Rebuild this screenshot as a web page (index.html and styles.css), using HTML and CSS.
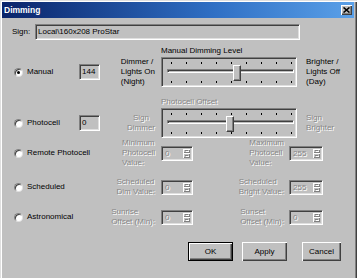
FILE: index.html
```html
<!DOCTYPE html>
<html>
<head>
<meta charset="utf-8">
<title>Dimming</title>
<link rel="stylesheet" href="styles.css">
</head>
<body>
<div class="win">
  <div class="titlebar">
    <span class="title">Dimming</span>
    <span class="close"><svg width="7" height="6" viewBox="0 0 7 6"><path d="M0.5 0.5 L6.5 5.5 M6.5 0.5 L0.5 5.5" stroke="#000" stroke-width="1.6"/></svg></span>
  </div>
  <div class="content">
    <div class="sign-row">
      <span class="sign-lbl">Sign:</span>
      <div class="field sign-field">Local\160x208 ProStar</div>
    </div>

    <div class="caption">Manual Dimming Level</div>
    <div class="row">
      <div class="choice"><span class="radio on"></span>Manual</div>
      <div class="tb"><div class="field val">144</div></div>
      <div class="llabel"><span>Dimmer /<br>Lights On<br>(Night)</span></div>
      <div class="slider">
        <div class="ticks"><i></i><i></i><i></i><i></i><i></i><i></i><i></i><i></i><i></i></div>
        <div class="channel"></div>
        <div class="ticks"><i></i><i></i><i></i><i></i><i></i><i></i><i></i><i></i><i></i></div>
        <div class="thumb" style="left:71px"></div>
      </div>
      <div class="rlabel">Brighter /<br>Lights Off<br>(Day)</div>
    </div>

    <div class="caption dis">Photocell Offset</div>
    <div class="row">
      <div class="choice"><span class="radio"></span>Photocell</div>
      <div class="tb"><div class="field val">0</div></div>
      <div class="llabel"><span class="dis center">Sign<br>Dimmer</span></div>
      <div class="slider">
        <div class="ticks"><i></i><i></i><i></i><i></i><i></i><i></i><i></i><i></i><i></i></div>
        <div class="channel"></div>
        <div class="ticks"><i></i><i></i><i></i><i></i><i></i><i></i><i></i><i></i><i></i></div>
        <div class="thumb" style="left:64px"></div>
      </div>
      <div class="rlabel dis">Sign<br>Brighter</div>
    </div>

    <div class="row">
      <div class="choice"><span class="radio"></span>Remote Photocell</div>
      <div class="tb"></div>
      <div class="llabel"><span class="dis">Minimum<br>Photocell<br>Value:</span></div>
      <div class="spin"><span class="spin-val dis">0</span><span class="spin-btns"><b class="up"></b><b class="down"></b></span></div>
      <div class="mlabel"><span class="dis">Maximum<br>Photocell<br>Value:</span></div>
      <div class="spin wide"><span class="spin-val dis">255</span><span class="spin-btns"><b class="up"></b><b class="down"></b></span></div>
    </div>

    <div class="row sched">
      <div class="choice"><span class="radio"></span>Scheduled</div>
      <div class="tb"></div>
      <div class="llabel"><span class="dis">Scheduled<br>Dim Value:</span></div>
      <div class="spin"><span class="spin-val dis">0</span><span class="spin-btns"><b class="up"></b><b class="down"></b></span></div>
      <div class="mlabel"><span class="dis">Scheduled<br>Bright Value:</span></div>
      <div class="spin wide"><span class="spin-val dis">255</span><span class="spin-btns"><b class="up"></b><b class="down"></b></span></div>
    </div>

    <div class="row">
      <div class="choice"><span class="radio"></span>Astronomical</div>
      <div class="tb"></div>
      <div class="llabel"><span class="dis">Sunrise<br>Offset (Min):</span></div>
      <div class="spin"><span class="spin-val dis">0</span><span class="spin-btns"><b class="up"></b><b class="down"></b></span></div>
      <div class="mlabel"><span class="dis">Sunset<br>Offset (Min):</span></div>
      <div class="spin wide"><span class="spin-val dis">0</span><span class="spin-btns"><b class="up"></b><b class="down"></b></span></div>
    </div>

    <div class="buttons">
      <button class="btn default">OK</button>
      <button class="btn apply">Apply</button>
      <button class="btn cancel">Cancel</button>
    </div>
  </div>
</div>
</body>
</html>
```

FILE: styles.css
```css
* { box-sizing: border-box; margin: 0; padding: 0; }
html, body { width: 357px; height: 278px; overflow: hidden; background: #c0c0c0; }
body {
  font-family: "Liberation Sans", Arial, sans-serif;
  font-size: 8px;
  line-height: 10px;
  color: #000;
}
.win {
  width: 357px;
  height: 278px;
  background: #c0c0c0;
  padding: 2px 3px 0 2px;
  box-shadow: inset 1px 1px #dfdfdf, inset 2px 2px #fff, inset -1px 0 #404040, inset -2px 0 #808080;
}
.titlebar {
  height: 16px;
  display: flex;
  align-items: center;
  padding: 0 2px 0 2px;
  background: linear-gradient(to right, #0a246a 0%, #2f6fc4 60%, #5aa0e8 100%);
  color: #fff;
}
.title { font-weight: bold; font-size: 8.5px; letter-spacing: 0; }
.close {
  margin-left: auto;
  width: 11px;
  height: 10px;
  background: #c0c0c0;
  display: flex;
  align-items: center;
  justify-content: center;
  box-shadow: inset 1px 1px #fff, inset -1px -1px #404040, inset -2px -2px #808080;
}
.content { padding-left: 10px; }

.field {
  background: #c0c0c0;
  border: 1px solid;
  border-color: #808080 #fff #fff #808080;
  box-shadow: inset 1px 1px #404040, inset -1px -1px #dfdfdf;
  padding: 0 0 0 2px;
  display: flex;
  align-items: center;
  white-space: nowrap;
}

.sign-row { margin-top: 6px; height: 16px; display: flex; align-items: center; }
.sign-lbl { width: 23px; }
.sign-field { width: 265px; height: 16px; }

.caption { margin-top: 6px; height: 10px; padding-left: 149px; }
.row + .caption { margin-top: 10px; }
.caption + .row { margin-top: 1px; }

.row { height: 30px; display: flex; align-items: center; }
.row.sched { margin-top: 4px; }

.choice { width: 67px; display: flex; align-items: center; gap: 4px; padding-left: 2px; white-space: nowrap; }
.radio {
  width: 9px; height: 9px;
  border-radius: 50%;
  background: #fff;
  border: 1px solid;
  border-color: #808080 #dfdfdf #dfdfdf #808080;
  box-shadow: inset 1px 1px #404040;
  display: flex; align-items: center; justify-content: center;
  flex: none;
}
.radio.on::after { content: ""; width: 3px; height: 3px; border-radius: 50%; background: #000; }

.tb { width: 21px; }
.val { width: 21px; height: 16px; }

.llabel { width: 61px; display: flex; justify-content: flex-end; padding-right: 6px; white-space: nowrap; }
.center { text-align: center; }

.slider {
  position: relative;
  width: 136px;
  height: 30px;
  border: 1px solid;
  border-color: #808080 #fff #fff #808080;
  box-shadow: inset 1px 1px #404040, inset -1px -1px #dfdfdf;
  padding: 4px 0 0 0;
  display: flex;
  flex-direction: column;
}
.ticks { height: 2px; display: flex; justify-content: space-between; margin: 0 4px 0 9px; }
.ticks i { width: 1px; height: 2px; background: #000; }
.channel {
  margin: 5px 2px 0 5px;
  height: 4px;
  border: 1px solid;
  border-color: #808080 #fff #fff #808080;
  box-shadow: inset 1px 1px #404040;
  background: #c0c0c0;
}
.channel + .ticks { margin-top: 8px; }
.thumb {
  position: absolute;
  top: 7px;
  width: 8px;
  height: 16px;
  background: #c0c0c0;
  border: 1px solid;
  border-color: #fff #404040 #404040 #fff;
  box-shadow: inset -1px -1px #808080;
}
.rlabel { margin-left: 9px; white-space: nowrap; }

.dis { color: #878787; text-shadow: 1px 1px 0 #fff; }

.spin {
  width: 32px; height: 15px;
  display: flex;
  background: #c0c0c0;
  border: 1px solid;
  border-color: #808080 #fff #fff #808080;
  box-shadow: inset 1px 1px #404040, inset -1px -1px #dfdfdf;
  padding: 2px 2px 2px 3px;
}
.spin.wide { width: 34px; }
.spin-val { flex: 1; line-height: 10px; }
.spin-btns { width: 7px; display: flex; flex-direction: column; }
.spin-btns b {
  flex: 1;
  background: #c0c0c0;
  box-shadow: inset 1px 1px #fff, inset -1px -1px #808080;
  display: flex; align-items: center; justify-content: center;
}
.spin-btns b::after { content: ""; width: 3px; height: 1px; background: #808080; box-shadow: 1px 1px #fff; }

.mlabel { width: 96px; display: flex; justify-content: flex-end; padding-right: 5px; white-space: nowrap; }

.buttons { margin-top: 10px; display: flex; justify-content: flex-end; padding-right: 13px; }
.btn {
  font-family: inherit; font-size: 8px; line-height: 10px; color: #000;
  height: 19px;
  background: #c0c0c0;
  border: none;
  box-shadow: inset 1px 1px #fff, inset -1px -1px #404040, inset -2px -2px #808080;
}
.btn.default {
  width: 45px;
  border: 1px solid #000;
  box-shadow: inset 1px 1px #fff, inset -1px -1px #404040, inset -2px -2px #808080;
}
.btn.apply { width: 45px; margin-left: 9px; }
.btn.cancel { width: 39px; margin-left: 15px; }
```
